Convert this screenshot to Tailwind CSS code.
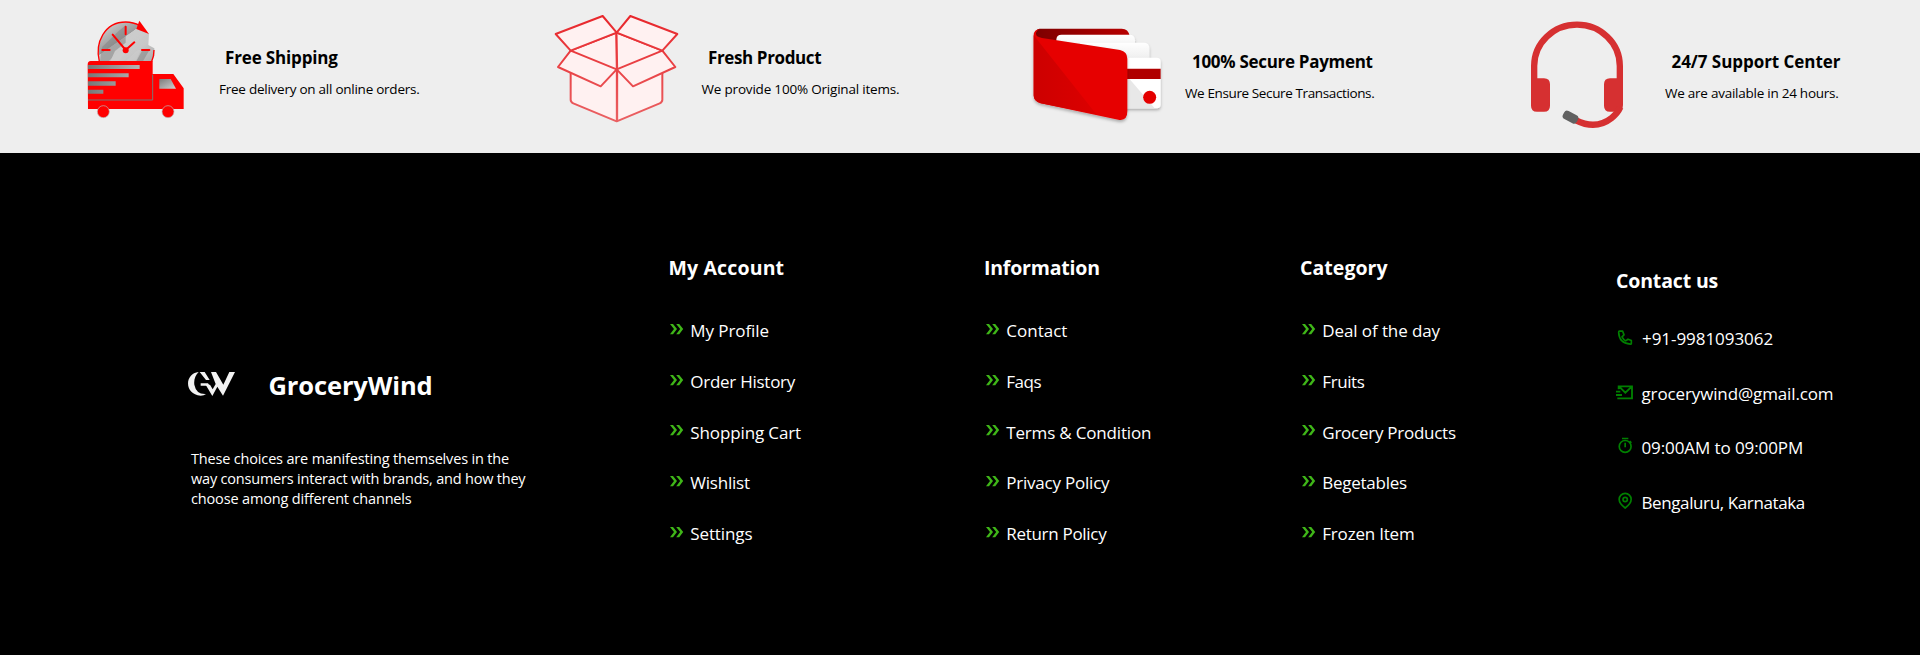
<!DOCTYPE html>
<html lang="en">
<head>
<meta charset="utf-8">
<title>GroceryWind</title>
<script src="https://cdn.jsdelivr.net/npm/@tailwindcss/browser@4"></script>
</head>
<body class="bg-black font-['Open_Sans','Noto_Sans',sans-serif] text-white">
<svg class="hidden"><symbol id="chev" viewBox="0 0 14 11"><path fill="#3fb618" d="M0 0h3l4 5.1-4 5.2H0l4-5.2zM6.2 0h3l4 5.1-4 5.2h-3l4-5.2z"/></symbol></svg>

<section class="grid h-[153px] grid-cols-4 bg-[#eeeeee] text-black">
  <div class="flex">
    <svg class="h-[153px] w-[220px] shrink-0" viewBox="-180 0 660 459">
      <defs>
        <linearGradient id="g1" x1="0" y1="0" x2="1" y2="1"><stop offset="0" stop-color="#e2e2e2"/><stop offset=".2" stop-color="#bdbdbd"/><stop offset=".42" stop-color="#999"/><stop offset=".43" stop-color="#ccc"/><stop offset=".7" stop-color="#c8c8c8"/><stop offset="1" stop-color="#aaa"/></linearGradient>
        <linearGradient id="g2"><stop offset="0" stop-color="#777"/><stop offset="1" stop-color="#b5b5b5"/></linearGradient>
        <linearGradient id="g4" x1="0" y1="0" x2="1" y2="1"><stop offset="0" stop-color="#7c7c7c"/><stop offset="1" stop-color="#d0d0d0"/></linearGradient>
      </defs>
      <path fill="url(#g1)" d="M118 184C106 128 136 66 197 66c26 0 46 12 70 36l-2 33 18 10v22l-7 17z"/>
      <path fill="#858585" opacity=".55" d="M127 140l50-48 20 11v25l-32 25-14 31h-31l3-28zM197 103V76l-20 16zM227 184l17-36 26-1-21 37z"/>
      <path fill="#ccc" opacity=".7" d="M146 184l51-50 30-48 34 15-52 40-33 43zM197 184l32-32 20-5-20 37z"/>
      <path fill="none" stroke="red" stroke-width="4" d="M118 184C104 128 134 66 197 66c18 0 30 4 42 11M282 150q0 20-7 34"/>
      <path fill="red" d="M238 62l-9 25 38 15z"/>
      <path fill="none" stroke="red" stroke-width="6" stroke-linecap="round" d="M197 80v23M127 150h22M246 150h22M158 104l39 46 26-23"/>
      <circle cx="197" cy="151" r="9" fill="red"/>
      <path fill="red" d="M83 194q0-11 9-11h186v39h62l31 43v62H84z"/>
      <path fill="url(#g2)" d="M84 195h155v12H84zM84 220h122v12H84zM84 244h83v13H84zM84 269h46v12H84z"/>
      <path fill="none" stroke="#777" stroke-width="3" d="M84 300h194v-76"/>
      <path fill="url(#g4)" d="M298 237h34l16 29h-50z"/>
      <circle cx="130" cy="335" r="18" fill="red" stroke="#bbb" stroke-width="2"/><circle cx="324" cy="335" r="18" fill="red" stroke="#bbb" stroke-width="2"/>
    </svg>
    <div class="mt-[46px]">
      <h3 class="ml-[5px] text-[17px] leading-6 font-bold tracking-[-0.15px]">Free Shipping</h3>
      <p class="mt-[8.6px] -ml-px text-[13.5px] leading-5 tracking-[-0.25px]">Free delivery on all online orders.</p>
    </div>
  </div>
  <div class="flex">
    <svg class="h-[153px] w-[222px] shrink-0" viewBox="-180 0 666 459">
      <defs><linearGradient id="g3" gradientUnits="userSpaceOnUse" x1="0" y1="48" x2="0" y2="365"><stop offset="0" stop-color="#e8262b"/><stop offset="1" stop-color="#ea6163"/></linearGradient></defs>
      <g fill="#fff1f1" stroke="url(#g3)" stroke-width="6" stroke-linejoin="round">
        <path d="M92 152l138-54 137 54v147q0 7-8 11l-129 54-130-54q-8-4-8-11z"/>
        <path d="M229 98l2 110v155" stroke-width="7"/>
        <path d="M47 102L188 48l42 50-138 54zM412 102L271 48l-41 50 137 54z"/>
        <path d="M92 152l138 56-48 51L54 201zM367 152l-137 56 49 51 127-58z"/>
      </g>
    </svg>
    <div class="mt-[46px]">
      <h3 class="ml-[6px] text-[17px] leading-6 font-bold tracking-[-0.38px]">Fresh Product</h3>
      <p class="mt-[8.6px] -ml-[0.4px] text-[13.5px] leading-5 tracking-[-0.2px]">We provide 100% Original items.</p>
    </div>
  </div>
  <div class="flex">
    <svg class="h-[153px] w-[225px] shrink-0" viewBox="-180 0 675 459">
      <defs>
        <filter id="sh" x="-20%" y="-20%" width="140%" height="150%"><feDropShadow dx="0" dy="6" stdDeviation="5" flood-opacity=".28"/></filter>
        <linearGradient id="w1"><stop offset="0" stop-color="#7d0000"/><stop offset="1" stop-color="#b80000"/></linearGradient>
        <linearGradient id="w2"><stop offset="0" stop-color="#cd0000"/><stop offset="1" stop-color="#dc0000"/></linearGradient>
        <linearGradient id="w3" x1="0" y1="0" x2="0" y2="1"><stop offset="0" stop-color="#fff"/><stop offset="1" stop-color="#e4e4e4"/></linearGradient>
      </defs>
      <path fill="url(#w1)" d="M60 86h245q20 0 24 22l-40 30L47 125V98q2-12 13-12z"/>
      <path filter="url(#sh)" fill="url(#w3)" d="M109 120q0-16 16-16h203q17 0 17 17v60H109z"/>
      <path filter="url(#sh)" fill="url(#w3)" d="M180 128h191q17 0 17 17v60H180z"/>
      <rect filter="url(#sh)" x="220" y="173" width="202" height="152" rx="12" fill="#fff"/>
      <path fill="#e8e8e8" d="M320 236h8l76 89h-84z"/>
      <path fill="#b00000" d="M300 206h122v31H300z"/>
      <circle cx="389" cy="292" r="19.500" fill="#e40000"/>
      <g filter="url(#sh)"><path fill="#e60000" d="M41 106q0-18 20-20-15 6-13 17 1 8 18 11l234 36q22 5 22 26v158q0 30-27 25L62 310q-21-5-21-24z"/></g>
      <path fill="url(#w2)" d="M41 106l188 237L62 310q-21-5-21-24z"/>
    </svg>
    <div class="mt-[50px]">
      <h3 class="ml-[7px] text-[17px] leading-6 font-bold tracking-[-0.3px]">100% Secure Payment</h3>
      <p class="mt-[8.6px] text-[13.5px] leading-5 tracking-[-0.38px]">We Ensure Secure Transactions.</p>
    </div>
  </div>
  <div class="flex">
    <svg class="h-[153px] w-[225px] shrink-0" viewBox="-180 0 675 459">
      <path fill="none" stroke="#d63031" stroke-width="19" d="M102.500 260v-62a128.500 124 0 0 1 257 0v62"/>
      <path fill="#d63031" d="M93 235h39q18 0 18 18v64q0 18-18 18h-21q-18 0-18-18zM369 235h-39q-18 0-18 18v64q0 18 18 18h21q18-2 18-20z"/>
      <path fill="none" stroke="#d63031" stroke-width="19" d="M228 361q60 30 107-7 18-14 26-32"/>
      <rect x="188" y="338" width="47" height="27" rx="10" fill="#616161" transform="rotate(28 211.500 351.500)"/>
    </svg>
    <div class="mt-[50px]">
      <h3 class="ml-[6.500px] text-[17px] leading-6 font-bold tracking-[-0.05px]">24/7 Support Center</h3>
      <p class="mt-[8.6px] text-[13.5px] leading-5 tracking-[-0.25px]">We are available in 24 hours.</p>
    </div>
  </div>
</section>

<footer class="flex h-[502px] bg-black">
  <div class="w-[669px] shrink-0 pt-[214px] pl-[187px]">
    <div class="flex h-9">
      <svg class="h-9 w-12 shrink-0" viewBox="81 51 144 108" fill="#f2f2f2">
        <path d="M116 66C73 70 72 134 122 137q10 0 16-5-29 2-35-28c-2-15 3-29 13-38z"/>
        <path d="M119 66h15l15 24h-11zM122 100h22l5 7h-27z"/>
        <path d="M153 66h15l22 38 18-38h17l-36 71-17-27-15 28-20-34h13l8 14 9-16z"/>
      </svg>
      <h2 class="ml-[33.500px] text-[25.5px] leading-9 font-bold tracking-[-0.12px]">GroceryWind</h2>
    </div>
    <p class="mt-[46.2px] ml-1 text-[14.5px] leading-5 whitespace-nowrap"><span class="tracking-[-0.17px]">These choices are manifesting themselves in the</span><br><span class="tracking-[-0.2px]">way consumers interact with brands, and how they</span><br><span class="tracking-[-0.16px]">choose among different channels</span></p>
  </div>

  <div class="w-[316px] shrink-0 pt-[101.2px]">
    <h3 class="-ml-[0.5px] text-[19.5px] leading-7 font-bold tracking-[0.15px]">My Account</h3>
    <ul class="mt-[37px] flex flex-col gap-[26.75px] text-[17px] leading-6">
      <li class="flex gap-[6.6px]"><svg class="mt-[4.6px] ml-[0.7px] h-[11px] w-[14px]"><use href="#chev"/></svg><a class="tracking-[-0.08px]">My Profile</a></li>
      <li class="flex gap-[6.6px]"><svg class="mt-[4.6px] ml-[0.7px] h-[11px] w-[14px]"><use href="#chev"/></svg><a class="tracking-[-0.26px]">Order History</a></li>
      <li class="flex gap-[6.6px]"><svg class="mt-[4.6px] ml-[0.7px] h-[11px] w-[14px]"><use href="#chev"/></svg><a class="tracking-[-0.12px]">Shopping Cart</a></li>
      <li class="flex gap-[6.6px]"><svg class="mt-[4.6px] ml-[0.7px] h-[11px] w-[14px]"><use href="#chev"/></svg><a class="tracking-[-0.22px]">Wishlist</a></li>
      <li class="flex gap-[6.6px]"><svg class="mt-[4.6px] ml-[0.7px] h-[11px] w-[14px]"><use href="#chev"/></svg><a class="tracking-[-0.12px]">Settings</a></li>
    </ul>
  </div>

  <div class="w-[316px] shrink-0 pt-[101.2px]">
    <h3 class="-ml-px text-[19.5px] leading-7 font-bold tracking-[-0.2px]">Information</h3>
    <ul class="mt-[37px] flex flex-col gap-[26.75px] text-[17px] leading-6">
      <li class="flex gap-[6.6px]"><svg class="mt-[4.6px] ml-[0.7px] h-[11px] w-[14px]"><use href="#chev"/></svg><a>Contact</a></li>
      <li class="flex gap-[6.6px]"><svg class="mt-[4.6px] ml-[0.7px] h-[11px] w-[14px]"><use href="#chev"/></svg><a class="tracking-[-0.5px]">Faqs</a></li>
      <li class="flex gap-[6.6px]"><svg class="mt-[4.6px] ml-[0.7px] h-[11px] w-[14px]"><use href="#chev"/></svg><a class="tracking-[-0.18px]">Terms &amp; Condition</a></li>
      <li class="flex gap-[6.6px]"><svg class="mt-[4.6px] ml-[0.7px] h-[11px] w-[14px]"><use href="#chev"/></svg><a class="tracking-[-0.22px]">Privacy Policy</a></li>
      <li class="flex gap-[6.6px]"><svg class="mt-[4.6px] ml-[0.7px] h-[11px] w-[14px]"><use href="#chev"/></svg><a class="tracking-[-0.3px]">Return Policy</a></li>
    </ul>
  </div>

  <div class="w-[315px] shrink-0 pt-[101.2px]">
    <h3 class="-ml-px text-[19.5px] leading-7 font-bold tracking-[0.05px]">Category</h3>
    <ul class="mt-[37px] flex flex-col gap-[26.75px] text-[17px] leading-6">
      <li class="flex gap-[6.6px]"><svg class="mt-[4.6px] ml-[0.7px] h-[11px] w-[14px]"><use href="#chev"/></svg><a class="tracking-[-0.1px]">Deal of the day</a></li>
      <li class="flex gap-[6.6px]"><svg class="mt-[4.6px] ml-[0.7px] h-[11px] w-[14px]"><use href="#chev"/></svg><a class="tracking-[-0.4px]">Fruits</a></li>
      <li class="flex gap-[6.6px]"><svg class="mt-[4.6px] ml-[0.7px] h-[11px] w-[14px]"><use href="#chev"/></svg><a class="tracking-[-0.26px]">Grocery Products</a></li>
      <li class="flex gap-[6.6px]"><svg class="mt-[4.6px] ml-[0.7px] h-[11px] w-[14px]"><use href="#chev"/></svg><a class="tracking-[-0.26px]">Begetables</a></li>
      <li class="flex gap-[6.6px]"><svg class="mt-[4.6px] ml-[0.7px] h-[11px] w-[14px]"><use href="#chev"/></svg><a class="tracking-[-0.2px]">Frozen Item</a></li>
    </ul>
  </div>

  <div class="pt-[114.2px]">
    <h3 class="text-[19.5px] leading-7 font-bold tracking-[-0.15px]">Contact us</h3>
    <ul class="mt-8 flex flex-col gap-[30.5px] text-[17px] leading-6 whitespace-nowrap">
      <li class="flex gap-[8px]"><svg class="h-6 w-[18px]" viewBox="49 201.400 54 72" fill="none" stroke="#008000" stroke-width="5" stroke-linejoin="round"><path d="M59 214h10l4 11-6 6q4 8 11 12l7-5 10 4v9q0 2-3 2-34-3-35-36 0-3 2-3z"/></svg><a class="tracking-[-0.05px]">+91-9981093062</a></li>
      <li class="flex gap-[7.500px]"><svg class="h-6 w-[18px]" viewBox="49 365.100 54 72" fill="none" stroke="#008000" stroke-width="5.500"><path d="M57 387v-9h40v36H57M58 378l19 19 20-19M49 394h13M49 404h18M53 414h8"/></svg><a class="tracking-[-0.13px]">grocerywind@gmail.com</a></li>
      <li class="flex gap-[7.500px]"><svg class="h-6 w-[18px]" viewBox="49 528.600 54 72" fill="none" stroke="#008000" stroke-width="5"><circle cx="76.500" cy="560" r="17.800"/><path d="M67 536h19M76.500 549v13M90 544l5 5"/></svg><a class="tracking-[-0.1px]">09:00AM to 09:00PM</a></li>
      <li class="flex gap-[7.500px]"><svg class="h-6 w-[18px]" viewBox="49 692.100 54 72" fill="none" stroke="#008000" stroke-width="5"><path d="M76.500 743q-18-13-18-26a18 18 0 0 1 36 0q0 13-18 26z"/><circle cx="76.500" cy="717.500" r="6.500"/></svg><a class="tracking-[-0.39px]">Bengaluru, Karnataka</a></li>
    </ul>
  </div>
</footer>
</body>
</html>
